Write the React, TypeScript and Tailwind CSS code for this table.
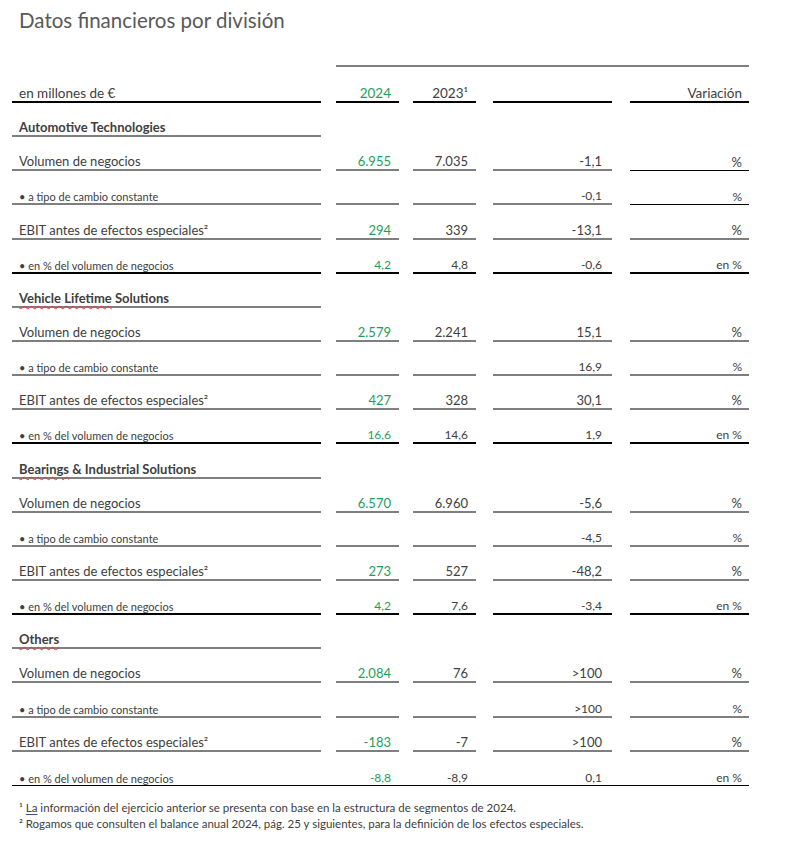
type Line = "k2" | "g2" | "k1" | "none";

const lineCls: Record<Line, string> = {
  k2: "border-b-2 border-black",
  g2: "border-b-2 border-[#7f7f7f]",
  k1: "border-b border-black",
  none: "",
};

const cols = [
  "w-[309px] justify-start pl-[7px]",
  "w-[63px] ml-[15px] justify-end pr-[8px]",
  "w-[63px] ml-[14px] justify-end pr-[8px]",
  "w-[119px] ml-[17px] justify-end pr-[10px]",
  "w-[119px] ml-[18px] justify-end pr-[7px]",
];

type Kind = "section" | "main" | "sub";

interface RowDef {
  kind: Kind;
  label: React.ReactNode;
  cur?: string;
  prev?: string;
  delta?: string;
  unit?: string;
  lines: Line[];
  full?: boolean;
}

const squiggle = "underline decoration-wavy decoration-[#e53935] decoration-1 underline-offset-[2px]";

const section = (name: React.ReactNode): RowDef => ({
  kind: "section",
  label: name,
  lines: ["g2", "none", "none", "none", "none"],
});

const block = (
  v: [string, string, string],
  fx: string,
  e: [string, string, string],
  p: [string, string, string],
  lastFull = false,
  volUnit: Line = "k1",
): RowDef[] => [
  { kind: "main", label: "Volumen de negocios", cur: v[0], prev: v[1], delta: v[2], unit: "%", lines: ["g2", "g2", "g2", "g2", volUnit] },
  { kind: "sub", label: "• a tipo de cambio constante", delta: fx, unit: "%", lines: ["g2", "g2", "g2", "g2", volUnit] },
  { kind: "main", label: <>EBIT antes de efectos especiales²</>, cur: e[0], prev: e[1], delta: e[2], unit: "%", lines: ["g2", "g2", "g2", "g2", "g2"] },
  {
    kind: "sub",
    label: "• en % del volumen de negocios",
    cur: p[0],
    prev: p[1],
    delta: p[2],
    unit: "en %",
    lines: lastFull ? ["none", "none", "none", "none", "none"] : ["k2", "k2", "k2", "k2", "k2"],
    full: lastFull,
  },
];

const rows: RowDef[] = [
  section("Automotive Technologies"),
  ...block(["6.955", "7.035", "-1,1"], "-0,1", ["294", "339", "-13,1"], ["4,2", "4,8", "-0,6"]),
  section(
    <>
      <span className={squiggle}>Vehicle Lifetime</span> Solutions
    </>,
  ),
  ...block(["2.579", "2.241", "15,1"], "16,9", ["427", "328", "30,1"], ["16,6", "14,6", "1,9"], false, "g2"),
  section(
    <>
      <span className={squiggle}>Bearings</span> &amp; Industrial Solutions
    </>,
  ),
  ...block(["6.570", "6.960", "-5,6"], "-4,5", ["273", "527", "-48,2"], ["4,2", "7,6", "-3,4"], false, "g2"),
  section(<span className={squiggle}>Others</span>),
  ...block(["2.084", "76", ">100"], ">100", ["-183", "-7", ">100"], ["-8,8", "-8,9", "0,1"], true, "g2"),
];

// label size vs. value size per row kind
const labelSize = { section: "text-[13px] font-bold", main: "text-[13px]", sub: "text-[11px]" };
const valueSize = { section: "text-[13px]", main: "text-[13px]", sub: "text-[12px]" };
const padFor = { section: "pb-[1px]", main: "pb-[1px]", sub: "pb-[1px]" };

const Row = ({ r }: { r: RowDef }) => {
  const vals = [r.label, r.cur, r.prev, r.delta, r.unit];
  return (
    <div className={`flex h-[34.15px] w-[737px] ${r.full ? "border-b border-black" : ""}`}>
      {vals.map((v, i) => (
        <div key={i} className={`flex h-full items-end ${padFor[r.kind]} ${cols[i]} ${lineCls[r.lines[i]]}`}>
          <span
            className={`leading-none whitespace-nowrap ${i === 0 ? labelSize[r.kind] : valueSize[r.kind]} ${
              i === 1 ? "text-[#1e9e5a]" : "text-[#404040]"
            }`}
          >
            {v}
          </span>
        </div>
      ))}
    </div>
  );
};

export default function App() {
  return (
    <div className="min-h-[860px] w-[793px] bg-white font-['Lato','Noto_Sans',sans-serif] text-[#404040]">
      <div className="h-[65px] pl-[19px] pt-[8px]">
        <h1 className="text-[20.5px] leading-[24px] text-[#595959]">Datos financieros por división</h1>
      </div>

      <div className="pl-[12px]">
        <div className="ml-[324px] h-[2px] w-[413px] bg-[#7f7f7f]" />

        <div className="flex h-[36px] w-[737px] text-[13.5px]">
          {["en millones de €", "2024", "2023¹", "", "Variación"].map((t, i) => (
            <div key={i} className={`flex h-full items-end pb-[1px] border-b-2 border-black ${cols[i]}`}>
              <span className={`leading-none ${i === 1 ? "text-[#1e9e5a]" : "text-[#404040]"}`}>{t}</span>
            </div>
          ))}
        </div>

        {rows.map((r, i) => (
          <Row key={i} r={r} />
        ))}
      </div>

      <div className="pl-[19px] pt-[14px] text-[11.5px] leading-[16px] text-[#404040]">
        <p>
          ¹ <span className="underline decoration-[#2b579a] underline-offset-2">La</span> información del ejercicio
          anterior se presenta con base en la estructura de segmentos de 2024.
        </p>
        <p>² Rogamos que consulten el balance anual 2024, pág. 25 y siguientes, para la definición de los efectos especiales.</p>
      </div>
    </div>
  );
}
